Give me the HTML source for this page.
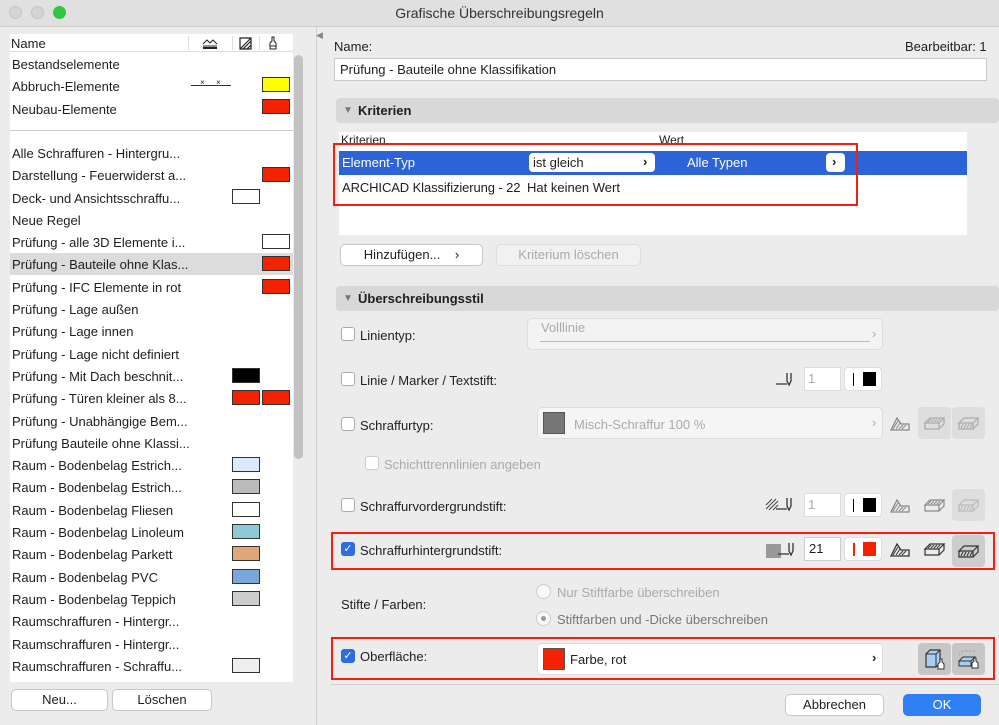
<!DOCTYPE html><html><head><meta charset="utf-8"><style>
*{box-sizing:border-box}body{margin:0;width:999px;height:725px;background:#ececec;font-family:"Liberation Sans",sans-serif;font-size:13px;color:#1e1e1e;position:relative;overflow:hidden}
.a{position:absolute}
.t{position:absolute;white-space:nowrap}
.sw{position:absolute;width:28px;height:15px;border:1px solid #333}
.btn{position:absolute;background:#fff;border:1px solid #c8c8c8;border-radius:5px;text-align:center;line-height:20px}
.cb{position:absolute;width:14px;height:14px;border:1px solid #aaa;background:#fff;border-radius:3px}
.cbon{background:#2d6de0;border-color:#2d6de0;color:#fff;font-size:11px;line-height:13px;text-align:center}
.red{position:absolute;border:2px solid #f02010}
.gr{color:#aaa}
svg.i{position:absolute;width:24px;height:18px}
</style></head><body>
<svg width="0" height="0" style="position:absolute"><defs>
<g id="hat"><path d="M3 15 L9 3 L13 9 L21 9 L21 15 Z" fill="none" stroke="currentColor" stroke-width="1.3"/><path d="M5 14 L10 6 M8 14 L12 8 M11 14 L15 10 M14 14 L18 10" stroke="currentColor" stroke-width="1"/></g>
<g id="box"><path d="M3 9 L8 4 L22 4 L17 9 Z M3 9 L3 15 L17 15 L17 9 M17 15 L22 10 L22 4" fill="none" stroke="currentColor" stroke-width="1.2"/><path d="M6 8 L9 5 M9 8 L12 5 M12 8 L15 5 M15 8 L18 5" stroke="currentColor"/></g>
<g id="box2"><path d="M3 9 L8 4 L22 4 L17 9 Z M3 9 L3 15 L17 15 L17 9 M17 15 L22 10 L22 4" fill="none" stroke="currentColor" stroke-width="1.2"/><path d="M5 14 L7 10 M8 14 L10 10 M11 14 L13 10 M14 14 L16 10" stroke="currentColor"/></g>
<g id="pen"><path d="M1 14 L12 14 M12 3 L12 11 L14 15 L16 11 L16 3" fill="none" stroke="currentColor" stroke-width="1.3"/></g>
</defs></svg>
<div class="a" style="left:0;top:0;width:999px;height:27px;background:#e0e0e0;border-bottom:1px solid #cfcfcf"></div>
<div class="a" style="left:9px;top:6px;width:13px;height:13px;border-radius:50%;background:#d4d4d4;border:1px solid #c4c4c4"></div>
<div class="a" style="left:31px;top:6px;width:13px;height:13px;border-radius:50%;background:#d4d4d4;border:1px solid #c4c4c4"></div>
<div class="a" style="left:53px;top:6px;width:13px;height:13px;border-radius:50%;background:#2fc840"></div>
<div class="t" style="left:0;width:999px;text-align:center;top:5px;font-size:14px;color:#333">Grafische Überschreibungsregeln</div>

<div class="a" style="left:10px;top:34px;width:283px;height:648px;background:#fff"></div>
<div class="a" style="left:10px;top:34px;width:283px;height:18px;border-bottom:1px solid #ddd"></div>
<div class="t" style="left:11px;top:36px">Name</div>
<div class="a" style="left:188px;top:36px;width:1px;height:14px;background:#ddd"></div>
<div class="a" style="left:232px;top:36px;width:1px;height:14px;background:#ddd"></div>
<div class="a" style="left:259px;top:36px;width:1px;height:14px;background:#ddd"></div>
<svg class="a" style="left:202px;top:37px" width="16" height="12"><path d="M1 7 L5 3 L8 6 L11 3 L15 7 M1 9 L15 9" fill="none" stroke="#222"/><rect x="1" y="10" width="14" height="2" fill="#222"/></svg>
<svg class="a" style="left:239px;top:37px" width="14" height="13"><path d="M1 12 L1 1 L12 1 L12 12 Z M1 12 L12 1 M4 12 L12 4 M8 12 L12 8" fill="none" stroke="#222" stroke-width="1.2"/></svg>
<svg class="a" style="left:268px;top:36px" width="10" height="14"><path d="M4 1 L6 1 L6 5 L8 7 L8 13 L2 13 L2 7 L4 5 Z M2 10 L8 10" fill="none" stroke="#222"/></svg>
<div class="a" style="left:294px;top:55px;width:9px;height:404px;background:#c2c2c2;border-radius:5px"></div>
<div class="a" style="left:10px;top:130px;width:283px;height:1px;background:#ccc"></div>
<div class="a" style="left:10px;top:253px;width:283px;height:22px;background:#dcdcdc"></div>
<div class="a" style="left:191px;top:85px;width:40px;height:1px;background:#333"></div>
<div class="t" style="left:200px;top:78px;font-size:8px">×</div><div class="t" style="left:216px;top:78px;font-size:8px">×</div>
<div class="sw" style="left:262px;top:77px;background:#ff0"></div>
<div class="sw" style="left:262px;top:99px;background:#f52200"></div>
<div class="btn" style="left:11px;top:689px;width:97px;height:22px">Neu...</div>
<div class="btn" style="left:112px;top:689px;width:100px;height:22px">Löschen</div>
<div class="a" style="left:316px;top:27px;width:1px;height:698px;background:#d0d0d0"></div>
<div class="t" style="left:316px;top:30px;font-size:9px;color:#888">◀</div>

<div class="t" style="left:334px;top:39px">Name:</div>
<div class="t" style="left:905px;top:39px">Bearbeitbar: 1</div>
<div class="a" style="left:334px;top:58px;width:653px;height:23px;background:#fff;border:1px solid #c8c8c8"></div>
<div class="t" style="left:340px;top:62px">Prüfung - Bauteile ohne Klassifikation</div>
<div class="a" style="left:336px;top:98px;width:663px;height:25px;background:#d8d8d8;border-radius:4px"></div>
<div class="t" style="left:343px;top:105px;font-size:10px;color:#777">▼</div><div class="t" style="left:358px;top:103px;font-weight:bold">Kriterien</div>
<div class="a" style="left:339px;top:132px;width:628px;height:103px;background:#fff"></div>
<div class="t" style="left:341px;top:133px;font-size:12px;height:10px;overflow:hidden">Kriterien</div>
<div class="t" style="left:659px;top:133px;font-size:12px;height:10px;overflow:hidden">Wert</div>
<div class="a" style="left:339px;top:151px;width:628px;height:24px;background:#2c63d8"></div>
<div class="t" style="left:342px;top:155px;color:#fff">Element-Typ</div>
<div class="a" style="left:529px;top:153px;width:126px;height:19px;background:#fff;border-radius:4px"></div>
<div class="t" style="left:533px;top:155px">ist gleich</div><div class="t" style="left:643px;top:154px;font-weight:bold">›</div>
<div class="t" style="left:687px;top:155px;color:#fff">Alle Typen</div>
<div class="a" style="left:826px;top:153px;width:19px;height:19px;background:#fff;border-radius:4px"></div><div class="t" style="left:832px;top:154px;font-weight:bold">›</div>
<div class="t" style="left:342px;top:180px;letter-spacing:-0.1px">ARCHICAD Klassifizierung - 22</div>
<div class="t" style="left:527px;top:180px">Hat keinen Wert</div>
<div class="red" style="left:333px;top:143px;width:525px;height:63px"></div>
<div class="btn" style="left:340px;top:244px;width:143px;height:22px">Hinzufügen... &nbsp;&nbsp;&nbsp;›</div>
<div class="btn gr" style="left:496px;top:244px;width:145px;height:22px;background:#f1f1f1;border-color:#ddd">Kriterium löschen</div>
<div class="a" style="left:336px;top:286px;width:663px;height:25px;background:#d8d8d8;border-radius:4px"></div>
<div class="t" style="left:343px;top:293px;font-size:10px;color:#777">▼</div><div class="t" style="left:358px;top:291px;font-weight:bold">Überschreibungsstil</div>

<div class="cb" style="left:341px;top:327px"></div><div class="t" style="left:360px;top:328px">Linientyp:</div>
<div class="a" style="left:527px;top:318px;width:356px;height:32px;background:#f3f3f3;border:1px solid #ddd;border-radius:5px"></div>
<div class="t gr" style="left:541px;top:320px">Volllinie</div><div class="a" style="left:540px;top:341px;width:330px;height:1px;background:#bbb"></div><div class="t gr" style="left:872px;top:326px">›</div>

<div class="cb" style="left:341px;top:372px"></div><div class="t" style="left:360px;top:373px">Linie / Marker / Textstift:</div>
<svg class="i" style="left:775px;top:370px;color:#333"><use href="#pen"/></svg>
<div class="a" style="left:804px;top:367px;width:37px;height:24px;background:#fff;border:1px solid #ddd"></div><div class="t gr" style="left:808px;top:371px">1</div>
<div class="a" style="left:844px;top:367px;width:38px;height:24px;background:#fff;border:1px solid #ddd;border-radius:4px"></div><div class="a" style="left:853px;top:373px;width:1px;height:13px;background:#000"></div><div class="a" style="left:863px;top:372px;width:13px;height:14px;background:#000"></div>

<div class="cb" style="left:341px;top:417px"></div><div class="t" style="left:360px;top:418px">Schraffurtyp:</div>
<div class="a" style="left:537px;top:407px;width:346px;height:32px;background:#f5f5f5;border:1px solid #ddd;border-radius:5px"></div>
<div class="a" style="left:543px;top:412px;width:22px;height:22px;background:#777;border:1px solid #555"></div>
<div class="t gr" style="left:574px;top:417px">Misch-Schraffur 100 %</div><div class="t gr" style="left:872px;top:415px">›</div>
<svg class="i" style="left:888px;top:415px;color:#888"><use href="#hat"/></svg>
<div class="a" style="left:918px;top:407px;width:33px;height:32px;background:#dedede;border-radius:4px"></div>
<div class="a" style="left:952px;top:407px;width:33px;height:32px;background:#dedede;border-radius:4px"></div>
<svg class="i" style="left:922px;top:414px;color:#aaa"><use href="#box"/></svg>
<svg class="i" style="left:956px;top:414px;color:#aaa"><use href="#box2"/></svg>
<div class="cb" style="left:365px;top:456px;border-color:#ccc"></div><div class="t gr" style="left:384px;top:457px">Schichttrennlinien angeben</div>

<div class="cb" style="left:341px;top:498px"></div><div class="t" style="left:360px;top:499px">Schraffurvordergrundstift:</div>
<svg class="a" style="left:765px;top:497px" width="14" height="14"><path d="M1 8 L7 2 M1 12 L11 2 M4 13 L13 4 M8 13 L13 8" stroke="#444"/></svg>
<svg class="i" style="left:775px;top:495px;color:#333"><use href="#pen"/></svg>
<div class="a" style="left:804px;top:493px;width:37px;height:24px;background:#fff;border:1px solid #ddd"></div><div class="t gr" style="left:808px;top:497px">1</div>
<div class="a" style="left:844px;top:493px;width:38px;height:24px;background:#fff;border:1px solid #ddd;border-radius:4px"></div><div class="a" style="left:853px;top:499px;width:1px;height:13px;background:#000"></div><div class="a" style="left:863px;top:498px;width:13px;height:14px;background:#000"></div>
<svg class="i" style="left:888px;top:497px;color:#888"><use href="#hat"/></svg>
<svg class="i" style="left:922px;top:496px;color:#888"><use href="#box"/></svg>
<div class="a" style="left:952px;top:489px;width:33px;height:32px;background:#dedede;border-radius:4px"></div>
<svg class="i" style="left:956px;top:496px;color:#bbb"><use href="#box2"/></svg>

<div class="red" style="left:331px;top:532px;width:664px;height:38px"></div>
<div class="cb cbon" style="left:341px;top:542px">✓</div><div class="t" style="left:360px;top:543px">Schraffurhintergrundstift:</div>
<div class="a" style="left:766px;top:544px;width:15px;height:14px;background:#999"></div>
<svg class="i" style="left:777px;top:540px;color:#333"><use href="#pen"/></svg>
<div class="a" style="left:804px;top:537px;width:37px;height:24px;background:#fff;border:1px solid #ccc"></div><div class="t" style="left:809px;top:541px">21</div>
<div class="a" style="left:844px;top:537px;width:38px;height:24px;background:#fff;border:1px solid #ddd;border-radius:4px"></div><div class="a" style="left:853px;top:543px;width:2px;height:13px;background:#f52200"></div><div class="a" style="left:863px;top:542px;width:13px;height:14px;background:#f52200"></div>
<svg class="i" style="left:888px;top:541px;color:#333"><use href="#hat"/></svg>
<svg class="i" style="left:922px;top:540px;color:#333"><use href="#box"/></svg>
<div class="a" style="left:952px;top:535px;width:33px;height:32px;background:#cdcdcd;border-radius:4px"></div>
<svg class="i" style="left:956px;top:542px;color:#333"><use href="#box2"/></svg>

<div class="t" style="left:341px;top:597px">Stifte / Farben:</div>
<div class="a" style="left:536px;top:584px;width:15px;height:15px;border-radius:50%;border:1px solid #ccc;background:#f8f8f8"></div><div class="t gr" style="left:557px;top:585px">Nur Stiftfarbe überschreiben</div>
<div class="a" style="left:536px;top:611px;width:15px;height:15px;border-radius:50%;border:1px solid #ccc;background:#f8f8f8"></div><div class="a" style="left:541px;top:616px;width:5px;height:5px;border-radius:50%;background:#999"></div><div class="t" style="left:557px;top:612px;color:#777">Stiftfarben und -Dicke überschreiben</div>

<div class="red" style="left:331px;top:637px;width:664px;height:43px"></div>
<div class="cb cbon" style="left:341px;top:649px">✓</div><div class="t" style="left:360px;top:649px">Oberfläche:</div>
<div class="a" style="left:537px;top:643px;width:346px;height:32px;background:#fff;border:1px solid #ddd;border-radius:5px"></div>
<div class="a" style="left:543px;top:648px;width:22px;height:22px;background:#f52200;border:1px solid #555"></div>
<div class="t" style="left:570px;top:652px">Farbe, rot</div><div class="t" style="left:872px;top:650px;font-weight:bold">›</div>
<div class="a" style="left:918px;top:643px;width:33px;height:32px;background:#c6c6c6;border-radius:4px"></div>
<div class="a" style="left:952px;top:643px;width:33px;height:32px;background:#c6c6c6;border-radius:4px"></div>
<svg class="a" style="left:923px;top:647px" width="24" height="24"><path d="M3 7 L7 3 L17 3 L17 16 L13 20 L3 20 Z" fill="#a9cdf5" stroke="#333" stroke-width="1.2"/><path d="M3 7 L13 7 L17 3 M13 7 L13 20" fill="none" stroke="#333"/><path d="M17 12 L19 12 L19 15 L21 17 L21 22 L15 22 L15 17 L17 15 Z" fill="#fff" stroke="#333"/></svg>
<svg class="a" style="left:956px;top:647px" width="26" height="24"><path d="M3 8 L7 4 L19 4" fill="none" stroke="#999" stroke-dasharray="2 2"/><path d="M3 14 L7 10 L19 10 L15 14 Z M3 14 L3 19 L15 19 L15 14" fill="#a9cdf5" stroke="#333"/><path d="M18 11 L20 11 L20 14 L22 16 L22 21 L16 21 L16 16 L18 14 Z" fill="#fff" stroke="#333"/></svg>

<div class="a" style="left:330px;top:684px;width:669px;height:1px;background:#d0d0d0"></div>
<div class="btn" style="left:785px;top:694px;width:99px;height:22px">Abbrechen</div>
<div class="btn" style="left:903px;top:694px;width:78px;height:22px;background:#2f7ff6;border-color:#2f7ff6;color:#fff">OK</div>

<div class="t" style="left:12px;top:54px;line-height:22.3px">Bestandselemente<br>Abbruch-Elemente<br>Neubau-Elemente</div>
<div class="t" style="left:12px;top:143px;line-height:22.3px">Alle Schraffuren - Hintergru...<br>Darstellung - Feuerwiderst a...<br>Deck- und Ansichtsschraffu...<br>Neue Regel<br>Prüfung - alle 3D Elemente i...<br>Prüfung - Bauteile ohne Klas...<br>Prüfung - IFC Elemente in rot<br>Prüfung - Lage außen<br>Prüfung - Lage innen<br>Prüfung - Lage nicht definiert<br>Prüfung - Mit Dach beschnit...<br>Prüfung - Türen kleiner als 8...<br>Prüfung - Unabhängige Bem...<br>Prüfung Bauteile ohne Klassi...<br>Raum - Bodenbelag Estrich...<br>Raum - Bodenbelag Estrich...<br>Raum - Bodenbelag Fliesen<br>Raum - Bodenbelag Linoleum<br>Raum - Bodenbelag Parkett<br>Raum - Bodenbelag PVC<br>Raum - Bodenbelag Teppich<br>Raumschraffuren - Hintergr...<br>Raumschraffuren - Hintergr...<br>Raumschraffuren - Schraffu...</div>
<div class="sw" style="left:262px;top:167px;background:#f52200"></div>
<div class="sw" style="left:232px;top:189px;background:#fff"></div>
<div class="sw" style="left:262px;top:234px;background:#fff"></div>
<div class="sw" style="left:262px;top:256px;background:#f52200"></div>
<div class="sw" style="left:262px;top:279px;background:#f52200"></div>
<div class="sw" style="left:232px;top:368px;background:#000"></div>
<div class="sw" style="left:232px;top:390px;background:#f52200"></div>
<div class="sw" style="left:262px;top:390px;background:#f52200"></div>
<div class="sw" style="left:232px;top:457px;background:#dce8fb"></div>
<div class="sw" style="left:232px;top:479px;background:#bbb"></div>
<div class="sw" style="left:232px;top:502px;background:#fff"></div>
<div class="sw" style="left:232px;top:524px;background:#8ccad8"></div>
<div class="sw" style="left:232px;top:546px;background:#e0a878"></div>
<div class="sw" style="left:232px;top:569px;background:#7aa6dc"></div>
<div class="sw" style="left:232px;top:591px;background:#ccc"></div>
<div class="sw" style="left:232px;top:658px;background:#eee"></div>
</body></html>
